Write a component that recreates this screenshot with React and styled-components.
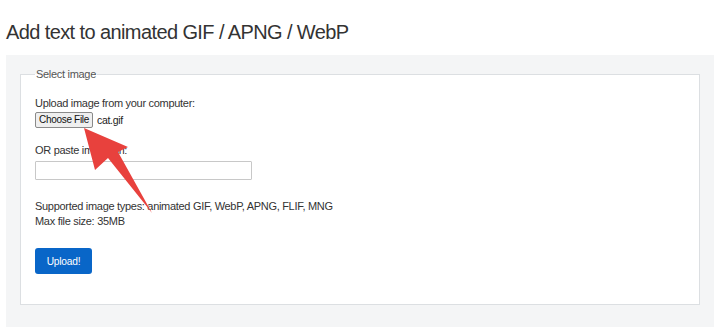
import React from 'react';
import styled, { createGlobalStyle } from 'styled-components';

const GlobalStyle = createGlobalStyle`
  body {
    margin: 0;
    background: #ffffff;
    font-family: "Liberation Sans", Arial, sans-serif;
    color: #333;
  }
`;

const Page = styled.div`
  position: relative;
  width: 720px;
  height: 334px;
  overflow: hidden;
  padding: 20px 6px 0;
  box-sizing: border-box;
`;

const Title = styled.h1`
  margin: 0 0 11px;
  font-size: 20px;
  letter-spacing: -0.6px;
  line-height: 24px;
  font-weight: normal;
  color: #333;
`;

const Panel = styled.div`
  background: #f4f5f6;
  padding: 12px 14px 22px;
`;

const Fieldset = styled.fieldset`
  margin: 0;
  padding: 0 14px 30px;
  border: 1px solid #dcdfe2;
  background: #fff;
  min-width: 0;
`;

const Legend = styled.legend`
  padding: 0 1px;
  font-size: 11px;
  letter-spacing: -0.3px;
  line-height: 15px;
  color: #555;
`;

const Label = styled.div`
  margin-top: ${p => p.$top}px;
  font-size: 11px;
  letter-spacing: -0.3px;
  line-height: 15px;
  color: #333;
`;

const FileRow = styled.div`
  display: flex;
  align-items: center;
  gap: 4px;
  height: 17px;
`;

const FileButton = styled.button`
  width: 58px;
  height: 16px;
  padding: 0;
  font-family: "Liberation Sans", Arial, sans-serif;
  font-size: 10px;
  letter-spacing: -0.3px;
  line-height: 14px;
  color: #111;
  background: #efefef;
  border: 1px solid #8a8a8a;
  border-radius: 2px;
`;

const FileName = styled.span`
  font-size: 10.5px;
  letter-spacing: -0.3px;
  color: #222;
`;

const UrlInput = styled.input`
  display: block;
  margin-top: 3px;
  width: 217px;
  height: 19px;
  box-sizing: border-box;
  border: 1px solid #c8c8c8;
  border-radius: 1px;
  padding: 0 4px;
`;

const UploadButton = styled.button`
  display: block;
  margin-top: 19px;
  width: 57px;
  height: 26px;
  padding: 0;
  font-family: "Liberation Sans", Arial, sans-serif;
  font-size: 10.2px;
  letter-spacing: -0.2px;
  color: #fff;
  background: #0966c8;
  border: none;
  border-radius: 3px;
`;

const ArrowOverlay = styled.svg`
  position: absolute;
  left: 0;
  top: 0;
  pointer-events: none;
`;

export default function App() {
  return (
    <>
      <GlobalStyle />
      <Page>
        <Title>Add text to animated GIF / APNG / WebP</Title>
        <Panel>
          <Fieldset>
            <Legend>Select image</Legend>
            <Label $top={14}>Upload image from your computer:</Label>
            <FileRow>
              <FileButton>Choose File</FileButton>
              <FileName>cat.gif</FileName>
            </FileRow>
            <Label $top={15}>OR paste image url:</Label>
            <UrlInput type="text" />
            <Label $top={19}>Supported image types: animated GIF, WebP, APNG, FLIF, MNG</Label>
            <Label $top={0}>Max file size: 35MB</Label>
            <UploadButton>Upload!</UploadButton>
          </Fieldset>
        </Panel>
        <ArrowOverlay width="720" height="334" viewBox="0 0 720 334">
          <polygon
            points="84,128 128,147 118,152 152,213 108,158 95,170"
            fill="#e8413d"
          />
        </ArrowOverlay>
      </Page>
    </>
  );
}
